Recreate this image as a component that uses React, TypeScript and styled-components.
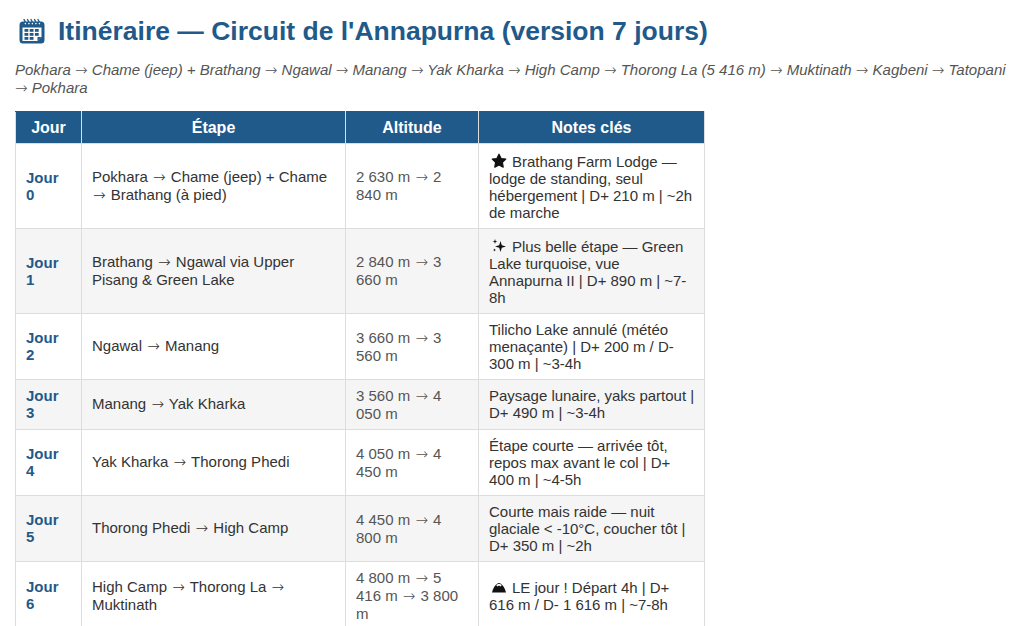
import React from "react";
import styled, { createGlobalStyle } from "styled-components";

const BLUE = "#1f5a8a";

const Global = createGlobalStyle`
  html, body { margin: 0; padding: 0; background: #fff; }
  body { font-family: "Liberation Sans", Arial, sans-serif; color: #333; }
`;

const Page = styled.div`
  padding: 16px 12px 0 15px;
`;

const Title = styled.h1`
  margin: 0;
  display: flex;
  align-items: center;
  gap: 12px;
  font-size: 26.5px;
  line-height: 30px;
  font-weight: bold;
  color: ${BLUE};
  padding-left: 3px;
`;

const Subtitle = styled.p`
  margin: 15px 0 13px;
  font-size: 15px;
  line-height: 17.25px;
  font-style: italic;
  color: #555;
`;

const Arrow = styled.span<{ $wide?: boolean }>`
  font-family: "DejaVu Sans", sans-serif;
  font-style: normal;
  font-weight: 200;
  font-size: 1em;
  margin: 0 ${(p) => (p.$wide ? "1px" : "0")};
`;

const Table = styled.table`
  border-collapse: collapse;
  font-size: 15px;
  line-height: 17px;
  table-layout: fixed;
  width: 689px;
`;

const Th = styled.th<{ $w: number }>`
  box-sizing: border-box;
  width: ${(p) => p.$w}px;
  background: ${BLUE};
  color: #fff;
  font-size: 16px;
  line-height: 17px;
  font-weight: bold;
  padding: 7px 10px;
  border: 1px solid #ddd;
  border-top-color: ${BLUE};
  text-align: center;
`;

const Row = styled.tr<{ $alt: boolean }>`
  background: ${(p) => (p.$alt ? "#f5f5f5" : "#fff")};
`;

const Td = styled.td<{ $tone: "day" | "alt" | "plain" }>`
  border: 1px solid #ddd;
  padding: 7px 10px;
  vertical-align: middle;
  font-weight: ${(p) => (p.$tone === "day" ? "bold" : "normal")};
  color: ${(p) => (p.$tone === "day" ? BLUE : p.$tone === "alt" ? "#555" : "#333")};
`;

const NoteCell = styled(Td)`
  padding-right: 8px;
  letter-spacing: -0.02px;
`;

const Glyph = styled.svg`
  display: inline-block;
  width: 16px;
  height: 16px;
  vertical-align: -2px;
  margin: 2px 5px 0 2px;
`;

const arrows = (text: string, wide = true) =>
  text.split("→").flatMap((part, i) =>
    i === 0 ? [part] : [<Arrow key={i} $wide={wide}>→</Arrow>, part]
  );

const CalendarIcon = () => (
  <svg width="28" height="28" viewBox="0 0 28 28" aria-hidden="true">
    <path
      d="M5 4.5h18a3.5 3.5 0 0 1 3.5 3.5v15a3.5 3.5 0 0 1-3.5 3.5H5A3.5 3.5 0 0 1 1.5 23V8A3.5 3.5 0 0 1 5 4.5z"
      fill={BLUE}
    />
    <path d="M4.5 10.5h19v9.5l-4 4h-15z" fill="#fff" />
    <path d="M23.5 20l-4 4v-4z" fill={BLUE} />
    {[6, 9.5, 13, 16.5, 20].map((x) => (
      <path key={x} d={`M${x} 2.5 l1.6 3`} stroke={BLUE} strokeWidth="1.4" strokeLinecap="round" />
    ))}
    {[6, 9.5, 13, 16.5, 20].map((x) => (
      <circle key={`c${x}`} cx={x + 1.4} cy="6.6" r="0.8" fill="#fff" />
    ))}
    {[0, 1, 2].map((r) =>
      [0, 1, 2].map((c) =>
        r === 2 && c === 2 ? null : (
          <rect key={`${r}-${c}`} x={6.5 + c * 5.2} y={12 + r * 4} width="3.8" height="2.8" fill={BLUE} />
        )
      )
    )}
  </svg>
);

const StarIcon = () => (
  <Glyph viewBox="0 0 16 16" aria-hidden="true">
    <path
      d="M8 1.2l2.1 4.3 4.7.6-3.4 3.3.8 4.7L8 11.9 3.8 14.1l.8-4.7L1.2 6.1l4.7-.6z"
      fill="#111"
      stroke="#111"
      strokeWidth="1.2"
      strokeLinejoin="round"
    />
  </Glyph>
);

const SparkleIcon = () => (
  <Glyph viewBox="0 0 16 16" aria-hidden="true">
    <path d="M9.5 3 L10.8 7.2 L15 8.5 L10.8 9.8 L9.5 14 L8.2 9.8 L4 8.5 L8.2 7.2 Z" fill="#111" />
    <path d="M4 1 L4.6 2.9 L6.5 3.5 L4.6 4.1 L4 6 L3.4 4.1 L1.5 3.5 L3.4 2.9 Z" fill="#111" />
    <path d="M3.5 10.5 L3.9 11.6 L5 12 L3.9 12.4 L3.5 13.5 L3.1 12.4 L2 12 L3.1 11.6 Z" fill="#111" />
  </Glyph>
);

const MountainIcon = () => (
  <Glyph viewBox="0 0 16 16" aria-hidden="true">
    <path d="M1 13.5 C2 9 4 6 6.5 4.5 C7.5 3.8 8.5 3.8 9.5 4.5 C12 6 14 9 15 13.5 Z" fill="#111" />
    <path d="M5.2 6.2 C6.5 4.6 9.5 4.6 10.8 6.2 L9.4 7.4 L8 6.4 L6.6 7.4 Z" fill="#fff" />
  </Glyph>
);

type Day = { n: number; step: string; alt: string; icon?: React.ReactNode; notes: string };

const days: Day[] = [
  { n: 0, step: "Pokhara → Chame (jeep) + Chame → Brathang (à pied)", alt: "2 630 m → 2 840 m", icon: <StarIcon />, notes: "Brathang Farm Lodge — lodge de standing, seul hébergement | D+ 210 m | ~2h de marche" },
  { n: 1, step: "Brathang → Ngawal via Upper Pisang & Green Lake", alt: "2 840 m → 3 660 m", icon: <SparkleIcon />, notes: "Plus belle étape — Green Lake turquoise, vue Annapurna II | D+ 890 m | ~7-8h" },
  { n: 2, step: "Ngawal → Manang", alt: "3 660 m → 3 560 m", notes: "Tilicho Lake annulé (météo menaçante) | D+ 200 m / D- 300 m | ~3-4h" },
  { n: 3, step: "Manang → Yak Kharka", alt: "3 560 m → 4 050 m", notes: "Paysage lunaire, yaks partout | D+ 490 m | ~3-4h" },
  { n: 4, step: "Yak Kharka → Thorong Phedi", alt: "4 050 m → 4 450 m", notes: "Étape courte — arrivée tôt, repos max avant le col | D+ 400 m | ~4-5h" },
  { n: 5, step: "Thorong Phedi → High Camp", alt: "4 450 m → 4 800 m", notes: "Courte mais raide — nuit glaciale < -10°C, coucher tôt | D+ 350 m | ~2h" },
  { n: 6, step: "High Camp → Thorong La → Muktinath", alt: "4 800 m → 5 416 m → 3 800 m", icon: <MountainIcon />, notes: "LE jour ! Départ 4h | D+ 616 m / D- 1 616 m | ~7-8h" },
];

export default function App() {
  return (
    <>
      <Global />
      <Page>
        <Title>
          <CalendarIcon />
          <span>Itinéraire — Circuit de l'Annapurna (version 7 jours)</span>
        </Title>
        <Subtitle>
          {arrows(
            "Pokhara → Chame (jeep) + Brathang → Ngawal → Manang → Yak Kharka → High Camp → Thorong La (5 416 m) → Muktinath → Kagbeni → Tatopani → Pokhara",
            false
          )}
        </Subtitle>
        <Table>
          <thead>
            <tr>
              <Th $w={66}>Jour</Th>
              <Th $w={264}>Étape</Th>
              <Th $w={133}>Altitude</Th>
              <Th $w={226}>Notes clés</Th>
            </tr>
          </thead>
          <tbody>
            {days.map((d) => (
              <Row key={d.n} $alt={d.n % 2 === 1}>
                <Td $tone="day">Jour {d.n}</Td>
                <Td $tone="plain">{arrows(d.step)}</Td>
                <Td $tone="alt">{arrows(d.alt)}</Td>
                <NoteCell $tone="plain">
                  {d.icon}
                  {d.notes}
                </NoteCell>
              </Row>
            ))}
          </tbody>
        </Table>
      </Page>
    </>
  );
}
